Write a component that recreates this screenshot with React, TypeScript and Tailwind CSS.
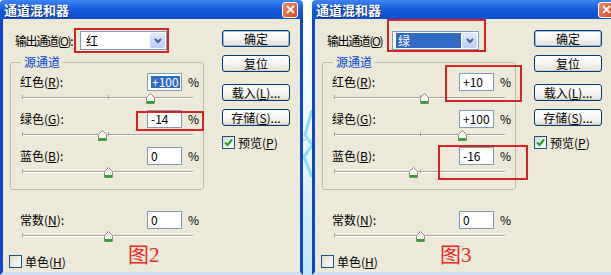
import React from "react";

type Row = { name: string; key: string; value: string; selected?: boolean; pos: number };

type Box = { left: number; top: number; width: number; height: number };

type DialogProps = {
  outLabel: string;
  channel: string;
  channelSelected?: boolean;
  rows: Row[];
  constant: number;
  fig: string;
  boxes: Box[];
  width: string;
};

// slider position: -200..+200 -> 0..100%
const pct = (v: number) => ((v + 200) / 400) * 100;

function Slider({ value }: { value: number }) {
  return (
    <div className="relative h-[19px] w-[171px]">
      <div className="absolute left-0 right-0 top-[6px] h-[2px] border-t border-[#a9a697] bg-white" />
      <div className="absolute left-0 top-[4px] h-[4px] w-px bg-[#a9a697]" />
      <div className="absolute left-1/2 top-[4px] h-[4px] w-px bg-[#a9a697]" />
      <svg
        className="absolute top-[2px]"
        style={{ left: `calc(${pct(value)}% - 4px)` }}
        width="9"
        height="11"
        viewBox="0 0 9 11"
      >
        <path d="M0.5 4.5 L4.5 0.5 L8.5 4.5 V10.5 H0.5 Z" fill="#fbfbf8" stroke="#8f8d80" />
        <rect x="1" y="8" width="7" height="2.5" fill="#2aa52a" />
      </svg>
    </div>
  );
}

function NumInput({ value, selected }: { value: string; selected?: boolean }) {
  return (
    <div className="flex h-[18px] w-[35px] shrink-0 items-center border border-[#7f9db9] bg-white pl-[3px] text-[12px] leading-none text-black">
      {selected ? <span className="bg-[#316ac5] px-px text-white">{value}</span> : value}
    </div>
  );
}

function XpButton({ children, primary }: { children: React.ReactNode; primary?: boolean }) {
  return (
    <div
      className={`flex h-[17px] w-[68px] items-center justify-center rounded-[3px] border border-[#003c74] bg-gradient-to-b from-white via-[#f6f5f1] to-[#e3e1d6] text-[12px] leading-none text-black ${
        primary ? "shadow-[inset_0_0_0_1px_#9fbdf0]" : "shadow-[inset_0_-1px_0_#d6d2c2]"
      }`}
    >
      {children}
    </div>
  );
}

function CheckBox({ checked }: { checked?: boolean }) {
  return (
    <div className="flex h-[13px] w-[13px] shrink-0 items-center justify-center border border-[#1c5180] bg-gradient-to-br from-[#dcdcd5] to-white">
      {checked && (
        <svg width="9" height="9" viewBox="0 0 9 9">
          <path d="M1 4.5 L3.5 7 L8 1.5" fill="none" stroke="#21a121" strokeWidth="2" />
        </svg>
      )}
    </div>
  );
}

function Dialog({ outLabel, channel, channelSelected, rows, constant, fig, boxes, width }: DialogProps) {
  return (
    <div className={`flex h-[275px] shrink-0 flex-col ${width}`}>
      {/* title bar */}
      <div className="flex h-[19px] shrink-0 items-center justify-between rounded-t-[4px] bg-gradient-to-b from-[#3d86f5] via-[#155ad9] to-[#0e4fcb] pl-[4px] pr-[5px]">
        <span className="text-[13px] font-bold leading-none text-white [text-shadow:1px_1px_0_#0a2f86]">通道混和器</span>
        <div className="flex h-[16px] w-[16px] items-center justify-center rounded-[3px] border border-white bg-gradient-to-br from-[#f08a6c] to-[#d3451e]">
          <svg width="9" height="9" viewBox="0 0 9 9">
            <path d="M1 1 L8 8 M8 1 L1 8" stroke="white" strokeWidth="1.8" />
          </svg>
        </div>
      </div>

      <div className="relative flex flex-1 border-x-[3px] border-b-[3px] border-[#0b47d1] border-b-[#cfe0f5] bg-[#ece9d8] text-[12px] leading-none text-black">
        {/* main column */}
        <div className="ml-[7px] flex w-[194px] shrink-0 flex-col">
          <div className="mt-[12px] flex h-[19px] items-center">
            <span className="w-[70px] whitespace-nowrap pl-[5px] tracking-[-1.4px]">
              输出通道(<u>O</u>){outLabel}
            </span>
            <div className="flex h-[19px] w-[87px] items-center border border-[#7f9db9] bg-white p-px">
              <div className="flex h-full flex-1 items-center pl-[2px]">
                {channelSelected ? (
                  <span className="flex h-full flex-1 items-center bg-[#316ac5] pl-[2px] text-white outline-1 outline-dotted outline-[#ffffff]">
                    {channel}
                  </span>
                ) : (
                  <span className="pl-[2px]">{channel}</span>
                )}
              </div>
              <div className="ml-px flex h-full w-[15px] items-center justify-center rounded-[2px] bg-gradient-to-b from-[#dfe9fd] to-[#b7ccf7]">
                <svg width="8" height="6" viewBox="0 0 8 6">
                  <path d="M1 1 L4 4 L7 1" fill="none" stroke="#4d6185" strokeWidth="2" />
                </svg>
              </div>
            </div>
          </div>

          <fieldset className="mt-[6px] rounded-[3px] border border-[#bdbaa8] pb-[5px]">
            <legend className="ml-[10px] px-[3px] text-[12px] leading-[12px] text-[#0046d5]">源通道</legend>
            <div className="mt-[5px] flex flex-col">
              {rows.map((r) => (
                <div key={r.key} className="flex flex-col">
                  <div className="flex h-[18px] items-center pl-[9px]">
                    <span className="flex-1">
                      {r.name}(<u>{r.key}</u>):
                    </span>
                    <NumInput value={r.value} selected={r.selected} />
                    <span className="w-[21px] pl-[6px]">%</span>
                  </div>
                  <div className="pl-[11px]">
                    <Slider value={r.pos} />
                  </div>
                </div>
              ))}
            </div>
          </fieldset>

          <div className="mt-[21px] flex h-[18px] items-center pl-[10px]">
            <span className="flex-1">
              常数(<u>N</u>):
            </span>
            <NumInput value={String(constant)} />
            <span className="w-[22px] pl-[6px]">%</span>
          </div>
          <div className="pl-[12px]">
            <Slider value={constant} />
          </div>

          <div className="ml-[-1px] mt-[7px] flex items-center gap-[3px]">
            <CheckBox />
            <span>
              单色(<u>H</u>)
            </span>
          </div>
        </div>

        {/* button column */}
        <div className="ml-[18px] flex flex-col pt-[11px]">
          <XpButton primary>确定</XpButton>
          <div className="mt-[8px]">
            <XpButton>复位</XpButton>
          </div>
          <div className="mt-[12px]">
            <XpButton>
              载入(<u>L</u>)...
            </XpButton>
          </div>
          <div className="mt-[8px]">
            <XpButton>
              存储(<u>S</u>)...
            </XpButton>
          </div>
          <div className="mt-[10px] flex items-center gap-[3px]">
            <CheckBox checked />
            <span>
              预览(<u>P</u>)
            </span>
          </div>
        </div>

        {/* red annotations drawn over the screenshot */}
        {boxes.map((b, i) => (
          <div
            key={i}
            className="absolute border-2 border-[#d62424]"
            style={{ left: b.left - 3, top: b.top - 19, width: b.width, height: b.height }}
          />
        ))}
        <span className="absolute left-[125px] top-[226px] font-['Liberation_Serif','Noto_Sans_CJK_SC',serif] text-[21px] leading-none text-[#ec2a26]">
          {fig}
        </span>
      </div>
    </div>
  );
}

export default function App() {
  return (
    <div className="flex h-[275px] w-[611px] overflow-hidden bg-white font-['Noto_Sans_CJK_SC',sans-serif]">
      <Dialog
        width="w-[303px]"
        outLabel=":"
        channel="红"
        rows={[
          { name: "红色", key: "R", value: "+100", selected: true, pos: 100 },
          { name: "绿色", key: "G", value: "-14", pos: -14 },
          { name: "蓝色", key: "B", value: "0", pos: 0 },
        ]}
        constant={0}
        fig="图2"
        boxes={[
          { left: 74, top: 28, width: 95, height: 25 },
          { left: 136, top: 111, width: 68, height: 20 },
        ]}
      />

      {/* desktop background strip between the two shots */}
      <div className="relative w-[9px] shrink-0 bg-gradient-to-b from-white via-[#eef9ff] to-[#bfe6fb]">
        <svg className="absolute left-0 top-[105px]" width="9" height="75" viewBox="0 0 9 75">
          <path d="M9 5 L2 30 L9 40 L1 52 L9 72" fill="none" stroke="#8fdaf5" strokeWidth="3" />
          <path d="M0 35 H9" stroke="#a6e3f8" strokeWidth="2" />
        </svg>
      </div>

      <Dialog
        width="w-[307px]"
        outLabel=""
        channel="绿"
        channelSelected
        rows={[
          { name: "红色", key: "R", value: "+10", pos: 10 },
          { name: "绿色", key: "G", value: "+100", pos: 100 },
          { name: "蓝色", key: "B", value: "-16", pos: -16 },
        ]}
        constant={0}
        fig="图3"
        boxes={[
          { left: 75, top: 19, width: 99, height: 33 },
          { left: 133, top: 65, width: 77, height: 37 },
          { left: 126, top: 145, width: 90, height: 35 },
        ]}
      />
    </div>
  );
}
